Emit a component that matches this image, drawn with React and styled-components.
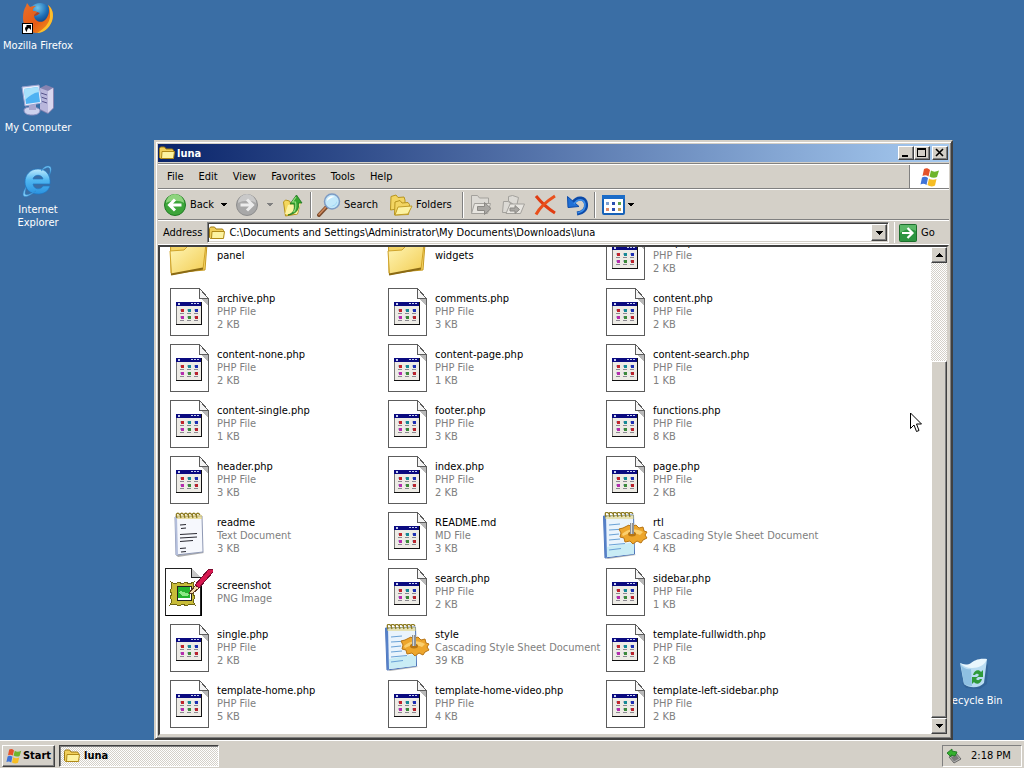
import React from 'react';
import styled, { createGlobalStyle, css } from 'styled-components';

const face = '#d4d0c8';

const raised = css`
  border: 1px solid;
  border-color: #fff #404040 #404040 #fff;
  box-shadow: inset -1px -1px 0 #808080;
`;

const checker = css`
  background: repeating-conic-gradient(#fff 0 25%, ${face} 0 50%) 0 0 / 2px 2px;
`;

const GlobalStyle = createGlobalStyle`
  * { box-sizing: border-box; }
  body { margin: 0; }
  body, button, input {
    font-family: "DejaVu Sans Condensed", "Liberation Sans", sans-serif;
    font-size: 11px;
    line-height: 13px;
    color: #000;
  }
  button { margin: 0; padding: 0; border: 0; background: none; }
  svg { display: block; flex: none; }
`;

const Screen = styled.div`
  display: flex;
  flex-direction: column;
  height: 100vh;
  overflow: hidden;
`;

const Desktop = styled.main`
  position: relative;
  flex: 1;
  min-height: 0;
  overflow: hidden;
  background: #3a6ea5;
`;

const Shortcut = styled.button`
  position: absolute;
  left: ${(p) => p.$left}px;
  top: ${(p) => p.$top}px;
  width: 76px;
  display: flex;
  flex-direction: column;
  align-items: center;
  gap: 4px;
  color: #fff;
`;

const Window = styled.section`
  position: absolute;
  left: 154px;
  right: 71px;
  top: 140px;
  bottom: 0;
  display: flex;
  flex-direction: column;
  padding: 2px;
  background: ${face};
  border: 2px solid;
  border-color: ${face} #404040 #404040 ${face};
  box-shadow: inset 1px 1px 0 #fff, inset -1px -1px 0 #808080;
`;

const TitleBar = styled.header`
  display: flex;
  align-items: center;
  height: 18px;
  margin-bottom: 2px;
  padding: 0 1px;
  gap: 2px;
  background: linear-gradient(90deg, #0a246a, #a6caf0);
`;

const Title = styled.h1`
  flex: 1;
  margin: 0;
  font-size: 11px;
  font-weight: bold;
  color: #fff;
`;

const CaptionButtons = styled.div`
  display: flex;
`;

const CaptionButton = styled.button`
  ${raised}
  width: 16px;
  height: 14px;
  background: ${face};
  margin-left: ${(p) => (p.$apart ? 2 : 0)}px;
`;

const Bar = styled.div`
  display: flex;
  flex: none;
  align-items: center;
  border-top: 1px solid #fff;
  border-bottom: 1px solid #808080;
`;

const MenuBar = styled(Bar)`
  height: 25px;
  padding-left: 9px;
  gap: 15px;
  box-shadow: 0 -1px 0 #808080;
`;

const Throbber = styled.div`
  display: flex;
  align-items: center;
  justify-content: center;
  align-self: stretch;
  width: 40px;
  margin-left: auto;
  background: #fff;
  border-left: 1px solid #808080;
`;

const ToolBar = styled(Bar)`
  height: 31px;
  padding-left: 5px;
  gap: 5px;
`;

const ToolGroup = styled.div`
  display: flex;
  align-items: center;
  gap: 8px;
`;

const ToolButton = styled.button`
  display: flex;
  align-items: center;
  width: ${(p) => p.$width || 24}px;
  height: 24px;
  gap: 3px;
  text-align: left;
`;

const ToolLabel = styled.span`
  flex: 1;
`;

const Separator = styled.div`
  width: 2px;
  height: 26px;
  border-left: 1px solid #808080;
  border-right: 1px solid #fff;
`;

const AddressBar = styled(Bar)`
  height: 25px;
  padding: 0 2px 0 5px;
  gap: 5px;
  border-bottom-color: #fff;
`;

const AddressField = styled.div`
  display: flex;
  flex: 1;
  align-items: center;
  height: 21px;
  padding-left: 1px;
  background: #fff;
  border: 1px solid;
  border-color: #808080 #fff #fff #808080;
  box-shadow: inset 1px 1px 0 #404040, inset -1px -1px 0 ${face};
`;

const AddressInput = styled.input`
  flex: 1;
  min-width: 0;
  height: 15px;
  padding: 0 0 0 4px;
  border: 0;
  outline: 0;
  background: none;
`;

const DropButton = styled.button`
  ${raised}
  display: flex;
  align-items: center;
  justify-content: center;
  width: 16px;
  height: ${(p) => p.$height || 16}px;
  flex: none;
  background-color: ${face};
`;

const AddressDrop = styled(DropButton)`
  margin-right: 1px;
`;

const GoButton = styled.button`
  display: flex;
  align-items: center;
  gap: 4px;
  width: 53px;
  height: 21px;
  padding-left: 4px;
  border-left: 1px solid #fff;
`;

const Client = styled.div`
  display: flex;
  flex: 1;
  min-height: 0;
  background: #fff;
  border: 2px solid;
  border-color: #404040 ${face} ${face} #404040;
`;

const FileArea = styled.div`
  flex: 1;
  min-width: 0;
  overflow: hidden;
`;

const FileGrid = styled.ul`
  display: grid;
  grid-template-columns: repeat(auto-fill, 218px);
  grid-auto-rows: 48px;
  row-gap: 8px;
  margin: -15px 0 0;
  padding: 0 0 0 5px;
  list-style: none;
`;

const FileItem = styled.li`
  display: flex;
  align-items: center;
  gap: 4px;
  white-space: nowrap;
`;

const FileText = styled.div`
  display: flex;
  flex-direction: column;
  padding-bottom: 1px;
`;

const FileMeta = styled.span`
  color: #808080;
`;

const ScrollBar = styled.div`
  display: flex;
  flex-direction: column;
  width: 16px;
  flex: none;
  background: ${face};
`;

const Track = styled.div`
  ${checker}
  height: 98px;
`;

const Thumb = styled.div`
  ${raised}
  flex: 1;
  background: ${face};
`;

const TaskBar = styled.footer`
  display: flex;
  flex: none;
  align-items: center;
  height: 28px;
  padding: 2px 2px 0;
  gap: 4px;
  background: ${face};
  border-top: 1px solid #fff;
`;

const StartButton = styled.button`
  ${raised}
  display: flex;
  align-items: center;
  justify-content: center;
  gap: 1px;
  width: 53px;
  height: 22px;
  font-weight: bold;
`;

const TaskButton = styled.button`
  ${checker}
  display: flex;
  align-items: center;
  gap: 4px;
  width: 160px;
  height: 22px;
  padding-left: 4px;
  border: 1px solid;
  border-color: #404040 #fff #fff #404040;
  box-shadow: inset 1px 1px 0 #808080;
  font-weight: bold;
`;

const Tray = styled.div`
  display: flex;
  align-items: center;
  gap: 9px;
  width: 80px;
  height: 22px;
  margin-left: auto;
  padding-left: 3px;
  border: 1px solid;
  border-color: #808080 #fff #fff #808080;
`;

const Pointer = styled.svg`
  position: absolute;
  left: 910px;
  top: 412px;
`;

/* ---------- drawings ---------- */

const FirefoxIcon = () => (
  <svg width="32" height="34" viewBox="0 0 32 34">
    <defs>
      <linearGradient id="foxBody" x1="0" y1="0" x2="1" y2="1">
        <stop offset="0" stopColor="#e8702a" />
        <stop offset=".55" stopColor="#e65a16" />
        <stop offset="1" stopColor="#f7a21b" />
      </linearGradient>
      <radialGradient id="foxGlobe" cx=".4" cy=".2" r=".8">
        <stop offset="0" stopColor="#6fc3ea" />
        <stop offset=".5" stopColor="#1d6db5" />
        <stop offset="1" stopColor="#0b2a66" />
      </radialGradient>
    </defs>
    <circle cx="18" cy="14" r="12" fill="url(#foxGlobe)" />
    <path d="M26 4c5 4 6 10 4 16-3 8-9 12-16 12C6 31 1 25 1 17c0-5 1-9 3-12l1-3 3 4c2-1 4-1 6-1-3 2-3 3-3 5 2 0 3 0 4 1-1 2-3 2-3 4 1 6 8 8 12 3 3-4 4-9 2-14z" fill="url(#foxBody)" />
    <path d="M26 4c5 4 6 10 4 16-3 8-9 12-15 12 7-4 12-9 13-16 0-5 0-8-2-12z" fill="#fbc02d" />
    <path d="M15 11c-1 2-3 2-3 4 2 0 4-1 6-3z" fill="#b9401a" />
    <rect x=".5" y="22.500" width="10" height="10" fill="#fff" stroke="#000" />
    <path d="M4 24h5v5l-2-2c-2 1-2 2-2 4-3-3-2-5 0-6z" fill="#000" />
  </svg>
);

const ComputerIcon = () => (
  <svg width="34" height="34" viewBox="0 0 34 34">
    <path d="M19 5l6-3 8 3v20l-6 6-8-4z" fill="#8683b0" />
    <path d="M19 5l8 3v22l-8-4z" fill="#b9b7dc" />
    <path d="M27 8l5-3v20l-5 5z" fill="#d8d6ee" />
    <path d="M20 10l6 2M20 14l6 2M20 18l6 2" stroke="#57548c" strokeWidth="1" />
    <path d="M3 27c0-4 14-4 16 0 0 4-4 5-8 5s-8-1-8-5z" fill="#cdd2ee" stroke="#8a8fc0" />
    <path d="M8 21h7v6H8z" fill="#a9a8cf" />
    <path d="M1 4l17-2 3 18L4 23z" fill="#e9edfb" stroke="#9aa3d0" />
    <path d="M3 6l14-2 2 15L5 21z" fill="#4fb2f2" />
    <path d="M3 6l14-2 1 5C12 10 8 13 4 17z" fill="#a7e1fb" />
  </svg>
);

const ExplorerIcon = () => (
  <svg width="32" height="34" viewBox="0 0 32 34">
    <defs>
      <linearGradient id="ieBlue" x1="0" y1="0" x2="0" y2="1">
        <stop offset="0" stopColor="#bdeafd" />
        <stop offset=".45" stopColor="#4fb6f1" />
        <stop offset="1" stopColor="#2b93e0" />
      </linearGradient>
    </defs>
    <path fillRule="evenodd" d="M16 4c8 0 13 6 12 15H11c1 6 8 6 10 2h7c-2 6-7 8-12 8C8 29 3 24 3 17S8 4 16 4zm-5 10h10c-1-5-9-5-10 0z" fill="url(#ieBlue)" stroke="#1f78c4" strokeWidth=".7" />
    <path d="M4 22C-1 30 1 33 6 31c4-2 8-5 8-5-7 4-11 5-11 2 0-2 1-4 1-6zM19 6c5-4 9-5 9-1 0 2 0 4-1 6 3-6 3-10-1-10-3 0-5 2-7 5z" fill="#7cc9f5" stroke="#2a84cc" strokeWidth=".5" />
  </svg>
);

const RecycleIcon = () => (
  <svg width="32" height="34" viewBox="0 0 32 34">
    <path d="M4 27l4 5 14 1 7-5 1-20z" fill="#2a5688" opacity=".45" />
    <path d="M2 7l12 4L29 3l-3 24c-4 5-14 6-20 1z" fill="#b9dcf2" />
    <path d="M2 7c4 2 8 2 11 0S20 2 29 3c-2 6-8 9-15 9-5 0-9-2-12-5z" fill="#e9f6fd" />
    <path d="M3 9c3 4 7 5 10 4l1 17c-4 0-6-1-8-2z" fill="#8fc0e2" />
    <g fill="#2f9a3a">
      <path d="M15 19c1-5 6-6 8-3l2-2v7h-6l2-2c-2-2-3-1-4 0z" />
      <path d="M24 23c-1 5-6 6-8 3l-2 2v-7h6l-2 2c2 2 3 1 4 0z" />
    </g>
  </svg>
);

const FlagIcon = ({ size = 16 }) => (
  <svg width={size} height={size} viewBox="0 0 20 20">
    <path d="M4 2c2-1 4-1 6 1L8.500 9.500C6.500 8 4.500 8 2.500 9z" fill="#e4532b" />
    <path d="M11 3.500c2 1.500 5 1.500 8 0L17 10c-2 1-5 1-7.500-.5z" fill="#6fb52c" />
    <path d="M2 10.500c2-1 4-1 6 .5L6.500 18c-2-1.500-4-1.500-6-.5z" fill="#3f73d8" />
    <path d="M9 11.500c2 1.500 5 1.500 7.500.500L15 18.500c-3 1.500-5 1-7.500-.500z" fill="#f6bd23" />
  </svg>
);

const SmallFolder = () => (
  <svg width="16" height="16" viewBox="0 0 16 16">
    <path d="M.5 12.500V3.500l1-1.500h4l1.500 2h6.500l1 1.500v7l-1 1h-12z" fill="#f1cf5a" stroke="#a07c12" />
    <path d="M2.500 13.500l.5-7h12.500l-1 7z" fill="#fdf3a0" stroke="#b08a18" />
  </svg>
);

const RoundArrow = ({ forward }) => (
  <svg width="24" height="24" viewBox="0 0 24 24">
    <circle cx="12" cy="12" r="10.500" fill={forward ? '#a8a8a8' : '#3da53a'} stroke={forward ? '#8d8d8d' : '#1f7a22'} />
    <path d="M3 10a9 9 0 0 1 18 0c-4-3-13-3-18 0z" fill={forward ? '#c9c9c9' : '#8ed47e'} />
    <path
      d={forward ? 'M5.500 12h11M12 6.500l5.500 5.500-5.500 5.500' : 'M18.500 12h-11M12 6.500L6.500 12l5.500 5.500'}
      fill="none"
      stroke={forward ? '#ececec' : '#fff'}
      strokeWidth="3"
    />
  </svg>
);

const DownArrow = ({ color = '#000', size = 7 }) => (
  <svg width={size} height="4" viewBox="0 0 7 4" shapeRendering="crispEdges">
    <path d="M0 0h7L3.500 4z" fill={color} />
  </svg>
);

const UpArrow = () => (
  <svg width="7" height="4" viewBox="0 0 7 4" shapeRendering="crispEdges">
    <path d="M0 4h7L3.500 0z" fill="#000" />
  </svg>
);

const UpFolderIcon = () => (
  <svg width="24" height="24" viewBox="0 0 24 24">
    <path d="M2.500 9l2-2 4 1 1 2 7-2 3 1-3 12-12 2z" fill="#f4d75e" stroke="#b7931c" />
    <path d="M4 21l3-9 13-2-4 11z" fill="#fdf3a2" />
    <path d="M7 22c6-2 7-6 6-11H9l6.500-9 5.500 8h-3.500c1 6-2 11-10.500 12z" fill="#35a52f" stroke="#1d7420" strokeWidth=".8" />
    <path d="M15 4l-3.500 5h3c1 5 0 8-2 10" fill="none" stroke="#93dc7c" strokeWidth="1.200" />
  </svg>
);

const SearchIcon = () => (
  <svg width="24" height="24" viewBox="0 0 24 24">
    <path d="M9.500 14L2 22" stroke="#7c4a2c" strokeWidth="4" strokeLinecap="round" />
    <path d="M8.500 14.500L2 21.500" stroke="#cf8a5c" strokeWidth="1.600" strokeLinecap="round" />
    <circle cx="15" cy="8.500" r="7.500" fill="#c3e8fa" stroke="#7d9bc4" strokeWidth="1.500" />
    <path d="M10 8c0-4 5-6 8-4-3 0-6 2-8 4z" fill="#fff" />
    <path d="M20 8c0 4-4 6-7 5 4 0 6-2 7-5z" fill="#8bcdf0" />
  </svg>
);

const FoldersIcon = () => (
  <svg width="24" height="24" viewBox="0 0 24 24">
    <path d="M1.500 17L2 3.500l5-1.500 2 2.500 6-.5 1 3v8z" fill="#f3d562" stroke="#b8951f" />
    <path d="M5.500 22L6 9l5-1.500 2 2.500 6-.5 1.500 2-1 10z" fill="#f3d562" stroke="#b8951f" />
    <path d="M6 22l3-8 14-1-4 8z" fill="#fdf2a0" stroke="#c19d27" />
  </svg>
);

const TransferIcon = ({ copy }) => (
  <svg width="24" height="24" viewBox="0 0 24 24">
    {copy ? (
      <g fill="#dcdad5" stroke="#a3a19c">
        <path d="M1.500 19.500l1-11h5l1.500 2h7v9z" />
        <path d="M7.500 8V3.500l4-1 6 2-2 9z" />
        <path d="M5 20.500L9 11h14.500l-4 9.500z" fill="#e7e5e0" />
        <path d="M9 15h5v-2.500l4.500 4-4.500 4V18H9z" fill="#a9a7a3" stroke="#8b8985" />
      </g>
    ) : (
      <g fill="#dcdad5" stroke="#a3a19c">
        <path d="M2.500 20.500v-18h6l2 2.500h9v5" />
        <path d="M2.500 20.500l3-10h16l-3 10z" fill="#e7e5e0" />
        <path d="M8.500 13.500h7V9.500l6.500 6-6.500 6v-4h-7z" fill="#a9a7a3" stroke="#8b8985" />
      </g>
    )}
  </svg>
);

const DeleteIcon = () => (
  <svg width="24" height="24" viewBox="0 0 24 24">
    <path d="M3 3c4 5 11 12 19 17" stroke="#e03c12" strokeWidth="3" fill="none" />
    <path d="M22 3C14 8 7 14 3 21.500" stroke="#e9501c" strokeWidth="3" fill="none" />
  </svg>
);

const UndoIcon = () => (
  <svg width="24" height="24" viewBox="0 0 24 24">
    <path d="M12 20.500c7-1 9.500-5 9-9.500-.8-6-8-8.500-13.500-.5" fill="none" stroke="#0c4aa8" strokeWidth="4" />
    <path d="M2.500 3.500l.5 11 11-1z" fill="#1f6fd6" stroke="#0c4aa8" />
    <path d="M12.500 20c6-1.500 8-5 7.500-9-1-5-7-6-11 0" fill="none" stroke="#3c8de8" strokeWidth="1.600" />
  </svg>
);

const ViewsIcon = () => (
  <svg width="24" height="24" viewBox="0 0 24 24">
    <rect x="2" y="3" width="21" height="18" rx="1" fill="#fff" stroke="#1661b8" strokeWidth="2" />
    <path d="M1 2h23v4H1z" fill="#1b6cc8" />
    <path d="M5 9h3v3H5z" fill="#7d9fd0" />
    <path d="M11 9h3v3h-3zM11 15h3v3h-3z" fill="#2b4fb0" />
    <path d="M17 9h3v3h-3z" fill="#5aa04a" />
    <path d="M5 15h3v3H5z" fill="#e08a66" />
    <path d="M17 15h3v3h-3z" fill="#c2a05a" />
  </svg>
);

const GoIcon = () => (
  <svg width="18" height="18" viewBox="0 0 18 18">
    <rect x=".5" y=".5" width="17" height="17" rx="1" fill="#2c9440" stroke="#1c6e2c" />
    <path d="M1 1h16v6C12 4 6 5 1 9z" fill="#5bb868" />
    <path d="M3 9h10M8.500 4l5 5-5 5" fill="none" stroke="#fff" strokeWidth="2.200" />
  </svg>
);

const Gem = ({ x, y, color }) => (
  <g>
    <path d={`M${x} ${y}h3v3h-3z`} fill={color} />
    <path d={`M${x - 1} ${y}h1v2h-1z`} fill="#b7bccb" />
    <path d={`M${x - 1} ${y + 4}h4v1h-4z`} fill="#8b8890" />
  </g>
);

const PageIcon = () => (
  <svg width="48" height="48" viewBox="0 0 48 48" shapeRendering="crispEdges">
    <path d="M5.500.5h29l9 10v37h-38z" fill="#fff" stroke="#5c5c5c" />
    <path d="M34.500.5v10h9z" fill="#f4f4f4" stroke="#5c5c5c" />
    <path d="M36 11h7v6z" fill="#b9b9b9" />
    <path d="M11 14h25v22H11z" fill="#eeece6" />
    <path d="M11 14h25v4H11z" fill="#0a0a80" />
    <path d="M13 15h2v2h-2zM26 15h2v1h-2zM29 15h2v1h-2zM32 15h2v1h-2z" fill="#c8d0f0" />
    <path d="M11 18h1v18h-1z" fill="#777" />
    <path d="M36 14h1v23H11v-1h25z" fill="#111" />
    <Gem x={16} y={21} color="#c2242c" />
    <Gem x={23} y={21} color="#168a96" />
    <Gem x={30} y={21} color="#1c2fb4" />
    <Gem x={16} y={28} color="#b52cae" />
    <Gem x={23} y={28} color="#3b8a3a" />
    <Gem x={30} y={28} color="#b8222c" />
  </svg>
);

const FolderIcon = () => (
  <svg width="48" height="48" viewBox="0 0 48 48">
    <defs>
      <linearGradient id="folderFront" x1="0" y1="0" x2="1" y2="1">
        <stop offset="0" stopColor="#fff6b8" />
        <stop offset="1" stopColor="#f2cc50" />
      </linearGradient>
    </defs>
    <path d="M6 41l-.5-30L9 8h10l3 4 16-3 4 3-2 26z" fill="#f5d566" stroke="#c79a22" />
    <path d="M6.500 42.500L5 19l14-1 4-4 18-2-3 25z" fill="url(#folderFront)" stroke="#cfa32a" />
    <path d="M6 42.500l32-6" stroke="#8a6a14" strokeWidth="2" />
  </svg>
);

const spirals = (n, start, step, y) => (
  <g fill="none" stroke="#8c7a20" strokeWidth="1.300">
    {Array.from({ length: n }, (_, i) => (
      <path key={i} d={`M${start + i * step} ${y + 5}c-2-5 1-6 3-3`} />
    ))}
  </g>
);

const TextIcon = () => (
  <svg width="48" height="48" viewBox="0 0 48 48">
    <path d="M11 43l27-3 1 1-26 4z" fill="#777" opacity=".6" />
    <path d="M10 5l27-1 1 36-27 3z" fill="#f6f8fd" stroke="#8e98b4" />
    <path d="M10 5h2l1 38h-2z" fill="#b3bedc" />
    <path d="M12 3h25v4H12z" fill="#e2cf6a" opacity=".6" />
    {spirals(6, 12, 4, 1)}
    <path d="M15 13l6-.5M16 16.500l5-.5M15 22.500l17-1M15 26l17-1M15 29.500l13-1M15 36.500l6-.5M16 40l5-.5" stroke="#2a2a33" strokeWidth="1.200" />
  </svg>
);

const CssIcon = () => (
  <svg width="48" height="48" viewBox="0 0 48 48">
    <path d="M5 46l28-4 2 1-28 4z" fill="#888" opacity=".6" />
    <path d="M2.500 4l30-1 1 39L4 46z" fill="#eaf4fc" stroke="#4a72b8" />
    <path d="M2.500 4H5l1 41-2 1z" fill="#5580c8" />
    <path d="M6 35l27-5v12L6 45z" fill="#c9ecf5" />
    <path d="M4 3h29v4H4z" fill="#e2cf6a" opacity=".5" />
    {spirals(7, 5, 4, 0)}
    <path d="M8 13l11-1M8 18l16-1M8 23l10-1M8 28l11-1M8 33l16-1.500M8 38l12-1.500" stroke="#6aa2d6" strokeWidth="1.200" />
    <path d="M24 15l4-2 2 2 5-2 3 3 4-1 1 4 3 1-2 3 2 3-4 2-2 3-4-2-4 3-3-3-5 1-1-4-4-1 1-4-2-4 4-1z" fill="#eda62c" stroke="#b87514" />
    <path d="M21 22c6-6 14-6 21-2l-3 3c-6-3-12-2-17 1z" fill="#fbcf6d" />
    <ellipse cx="31" cy="22" rx="4" ry="2.500" fill="#b47415" />
    <path d="M29 11h4v11h-4z" fill="#8e9296" />
    <path d="M30 11h1v11h-1z" fill="#d7dadd" />
  </svg>
);

const ImageIcon = () => (
  <svg width="48" height="48" viewBox="0 0 48 48" shapeRendering="crispEdges">
    <path d="M.5.5h26l9 9v38H.5z" fill="#fff" stroke="#222" />
    <path d="M26.500.5v9h9" fill="#c8c8c8" stroke="#222" />
    <path d="M36 10v37.500H1" fill="none" stroke="#000" />
    <path d="M6 14l4 2 4-2 3 2 4-2 3 2 5-2-1 5 2 3-2 4 2 3-2 4 2 4-5-1-4 2-3-2-4 2-4-2-5 1 2-4-2-4 2-3-2-3 2-4z" fill="#c8bc38" stroke="#6d6414" />
    <path d="M12.500 18.500h14v14h-14z" fill="#fff" stroke="#222" />
    <path d="M13 19h12v11H13z" fill="#25b52c" />
    <path d="M14 24c3-2 6 1 10 2-2 4-8 3-10-2z" fill="#8fe885" />
    <path d="M24 25l7-8 3 3-7 6z" fill="#f3d9a8" stroke="#5c3a22" />
    <path d="M30 17L44 1h4v3L34 20z" fill="#d81850" stroke="#7a0c30" />
  </svg>
);

const TrayIcon = () => (
  <svg width="16" height="16" viewBox="0 0 16 16">
    <path d="M3 9l7-4 5 6-7 4z" fill="#b4b4b4" stroke="#555" strokeWidth=".8" />
    <path d="M5 9.500l5-3 3 4-5 3z" fill="#7a7a7a" />
    <path d="M1 5l5-4v2l5 1-2 4-4-1v2z" fill="#35b12f" stroke="#15701a" strokeWidth=".8" />
  </svg>
);

/* ---------- content ---------- */

const icons = { page: PageIcon, folder: FolderIcon, text: TextIcon, css: CssIcon, image: ImageIcon };

const php = (name, size) => ({ name, type: 'PHP File', size, icon: 'page' });
const sheet = (name, size) => ({ name, type: 'Cascading Style Sheet Document', size, icon: 'css' });

const files = [
  { name: 'panel', icon: 'folder' },
  { name: 'widgets', icon: 'folder' },
  php('404.php', '2 KB'),
  php('archive.php', '2 KB'),
  php('comments.php', '3 KB'),
  php('content.php', '2 KB'),
  php('content-none.php', '2 KB'),
  php('content-page.php', '1 KB'),
  php('content-search.php', '1 KB'),
  php('content-single.php', '1 KB'),
  php('footer.php', '3 KB'),
  php('functions.php', '8 KB'),
  php('header.php', '3 KB'),
  php('index.php', '2 KB'),
  php('page.php', '2 KB'),
  { name: 'readme', type: 'Text Document', size: '3 KB', icon: 'text' },
  { name: 'README.md', type: 'MD File', size: '3 KB', icon: 'page' },
  sheet('rtl', '4 KB'),
  { name: 'screenshot', type: 'PNG Image', icon: 'image' },
  php('search.php', '2 KB'),
  php('sidebar.php', '1 KB'),
  php('single.php', '2 KB'),
  sheet('style', '39 KB'),
  php('template-fullwidth.php', '2 KB'),
  php('template-home.php', '5 KB'),
  php('template-home-video.php', '4 KB'),
  php('template-left-sidebar.php', '2 KB'),
];

const File = ({ file }) => {
  const Icon = icons[file.icon];
  return (
    <FileItem>
      <Icon />
      <FileText>
        <span>{file.name}</span>
        {file.type && <FileMeta>{file.type}</FileMeta>}
        {file.size && <FileMeta>{file.size}</FileMeta>}
      </FileText>
    </FileItem>
  );
};

export default function App() {
  return (
    <Screen>
      <GlobalStyle />
      <Desktop>
        <Shortcut $left={0} $top={1}><FirefoxIcon />Mozilla Firefox</Shortcut>
        <Shortcut $left={0} $top={83}><ComputerIcon />My Computer</Shortcut>
        <Shortcut $left={0} $top={165}><ExplorerIcon /><span>Internet<br />Explorer</span></Shortcut>
        <Shortcut $left={936} $top={656}><RecycleIcon />Recycle Bin</Shortcut>

        <Window>
          <TitleBar>
            <SmallFolder />
            <Title>luna</Title>
            <CaptionButtons>
              <CaptionButton aria-label="Minimize">
                <svg width="14" height="12" viewBox="0 0 14 12"><path d="M3 8h6v2H3z" /></svg>
              </CaptionButton>
              <CaptionButton aria-label="Maximize">
                <svg width="14" height="12" viewBox="0 0 14 12"><path fillRule="evenodd" d="M2 1h9v9H2zm1 2v6h7V3z" /></svg>
              </CaptionButton>
              <CaptionButton aria-label="Close" $apart>
                <svg width="14" height="12" viewBox="0 0 14 12"><path d="M3 2l7 7M10 2L3 9" stroke="#000" strokeWidth="1.600" /></svg>
              </CaptionButton>
            </CaptionButtons>
          </TitleBar>

          <MenuBar>
            {['File', 'Edit', 'View', 'Favorites', 'Tools', 'Help'].map((m) => (
              <button key={m}>{m}</button>
            ))}
            <Throbber><FlagIcon size={20} /></Throbber>
          </MenuBar>

          <ToolBar>
            <ToolGroup>
              <ToolButton $width={64}><RoundArrow /><ToolLabel>Back</ToolLabel><DownArrow size={6} /></ToolButton>
              <ToolButton $width={38} aria-label="Forward"><RoundArrow forward /><ToolLabel /><DownArrow size={6} color="#808080" /></ToolButton>
              <ToolButton aria-label="Up"><UpFolderIcon /></ToolButton>
            </ToolGroup>
            <Separator />
            <ToolGroup>
              <ToolButton $width={64}><SearchIcon /><ToolLabel>Search</ToolLabel></ToolButton>
              <ToolButton $width={68}><FoldersIcon /><ToolLabel>Folders</ToolLabel></ToolButton>
            </ToolGroup>
            <Separator />
            <ToolGroup>
              <ToolButton aria-label="Move To"><TransferIcon /></ToolButton>
              <ToolButton aria-label="Copy To"><TransferIcon copy /></ToolButton>
              <ToolButton aria-label="Delete"><DeleteIcon /></ToolButton>
              <ToolButton aria-label="Undo"><UndoIcon /></ToolButton>
            </ToolGroup>
            <Separator />
            <ToolButton $width={34} aria-label="Views"><ViewsIcon /><DownArrow size={6} /></ToolButton>
          </ToolBar>

          <AddressBar>
            <label htmlFor="address">Address</label>
            <AddressField>
              <SmallFolder />
              <AddressInput
                id="address"
                defaultValue={'C:\\Documents and Settings\\Administrator\\My Documents\\Downloads\\luna'}
              />
              <AddressDrop $height={17} aria-label="Show addresses"><DownArrow /></AddressDrop>
            </AddressField>
            <GoButton><GoIcon />Go</GoButton>
          </AddressBar>

          <Client>
            <FileArea>
              <FileGrid>
                {files.map((f) => <File key={f.name} file={f} />)}
              </FileGrid>
            </FileArea>
            <ScrollBar>
              <DropButton aria-label="Scroll up"><UpArrow /></DropButton>
              <Track />
              <Thumb />
              <DropButton aria-label="Scroll down"><DownArrow /></DropButton>
            </ScrollBar>
          </Client>
        </Window>

        <Pointer width="13" height="21" viewBox="0 0 13 21">
          <path d="M.5 1v15.500l3.500-3.500 2.500 6.500 2.500-1-2.500-6.500h5z" fill="#fff" stroke="#000" />
        </Pointer>
      </Desktop>

      <TaskBar>
        <StartButton><FlagIcon size={16} />Start</StartButton>
        <TaskButton><SmallFolder />luna</TaskButton>
        <Tray><TrayIcon />2:18 PM</Tray>
      </TaskBar>
    </Screen>
  );
}
